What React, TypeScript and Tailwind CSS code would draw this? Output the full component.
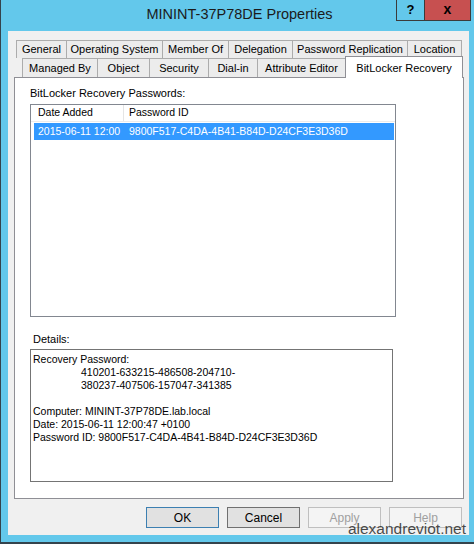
const ROW1 = [
  { label: 'General', w: 50 },
  { label: 'Operating System', w: 96 },
  { label: 'Member Of', w: 66 },
  { label: 'Delegation', w: 64 },
  { label: 'Password Replication', w: 115 },
  { label: 'Location', w: 55 },
];

const ROW2 = [
  { label: 'Managed By', w: 75 },
  { label: 'Object', w: 52 },
  { label: 'Security', w: 59 },
  { label: 'Dial-in', w: 49 },
  { label: 'Attribute Editor', w: 88 },
];

const FONT = "font-['Liberation_Sans',Arial,sans-serif]";

function Btn({ label, kind }: { label: string; kind: 'default' | 'normal' | 'disabled' }) {
  const cls =
    kind === 'default'
      ? 'border-[#3c7fb1] bg-[#e1e1e1] text-black'
      : kind === 'normal'
        ? 'border-[#707070] bg-[#e1e1e1] text-black'
        : 'border-[#bfbfbf] bg-[#f4f4f4] text-[#a0a0a0]';
  return (
    <div className={`w-[73px] h-[21px] border flex items-center justify-center text-[12px] ${cls}`}>{label}</div>
  );
}

export default function App() {
  return (
    <div className={`relative w-[474px] h-[544px] bg-[#63c8eb] border-l border-b-2 border-[#34434c] overflow-hidden ${FONT}`}>
      {/* Title bar */}
      <div className="relative h-[31px] flex items-center justify-center">
        <span className="text-[14.5px] text-[#1b1b1b] pl-[4px] pb-[1px]">MININT-37P78DE Properties</span>
        <div className="absolute top-0 left-[395px] flex">
          <div className="w-[29px] h-[21px] border border-t-0 border-[#3b3b3b] flex items-center justify-center text-[13px] font-bold text-black">?</div>
          <div className="w-[46px] h-[21px] border border-t-0 border-l-0 border-[#3b3b3b] bg-[#c75050] flex items-center justify-center text-[14px] font-bold text-black leading-none pb-[2px]">x</div>
        </div>
      </div>

      {/* Client area */}
      <div className="ml-[7px] w-[461px] h-[504px] bg-[#f0f0f0] pt-[9px] text-[11px] text-black">
        <div className="ml-[6px] w-[450px]">
          {/* Tabs row 1 */}
          <div className="flex ml-[2px] h-[18px]">
            {ROW1.map((t, i) => (
              <div
                key={t.label}
                style={{ width: t.w }}
                className={`h-[18px] border-t border-l border-[#acacac] bg-[#ececec] flex items-center justify-center whitespace-nowrap ${i === ROW1.length - 1 ? 'border-r' : ''}`}
              >
                {t.label}
              </div>
            ))}
          </div>
          {/* Tabs row 2 */}
          <div className="flex items-end ml-[8px] h-[19px]">
            {ROW2.map((t) => (
              <div
                key={t.label}
                style={{ width: t.w }}
                className="h-[19px] border-t border-l border-[#acacac] bg-[#ececec] flex items-center justify-center whitespace-nowrap"
              >
                {t.label}
              </div>
            ))}
            <div className="relative z-10 w-[118px] h-[22px] -mb-px border border-b-0 border-[#8f8f95] bg-white flex items-start justify-center pt-[3px] whitespace-nowrap">
              BitLocker Recovery
            </div>
          </div>
          {/* Panel */}
          <div className="h-[422px] border border-[#8f8f95] bg-white pl-[15px] pt-[9px]">
            <div className="leading-[12px] h-[12px]">BitLocker Recovery Passwords:</div>
            <div className="mt-[5px] w-[366px] h-[213px] border border-[#828790] bg-white text-[10.5px]">
              <div className="flex h-[17px] border-b border-[#ececec] items-center">
                <div className="w-[93px] h-full border-r border-[#e5e5e5] flex items-center pl-[7px]">Date Added</div>
                <div className="flex-1 pl-[5px]">Password ID</div>
              </div>
              <div className="ml-[3px] mr-px mt-px h-[17px] bg-[#3399ff] text-white flex items-center">
                <div className="w-[93px] pl-[4px] whitespace-nowrap">2015-06-11 12:00</div>
                <div className="pl-[2px] whitespace-nowrap">9800F517-C4DA-4B41-B84D-D24CF3E3D36D</div>
              </div>
            </div>
            <div className="mt-[16px] pl-[3px] leading-[12px] h-[12px]">Details:</div>
            <div className="mt-[4px] w-[363px] h-[133px] border border-[#747474] bg-white pt-[3px] pl-[2px] leading-[13px] text-[10.5px]">
              <div>Recovery Password:</div>
              <div className="pl-[48px]">410201-633215-486508-204710-</div>
              <div className="pl-[48px]">380237-407506-157047-341385</div>
              <div className="h-[13px]" />
              <div>Computer: MININT-37P78DE.lab.local</div>
              <div>Date: 2015-06-11 12:00:47 +0100</div>
              <div>Password ID: 9800F517-C4DA-4B41-B84D-D24CF3E3D36D</div>
            </div>
          </div>
        </div>
        {/* Buttons */}
        <div className="mt-[8px] flex justify-end gap-[8px] pr-[7px]">
          <Btn label="OK" kind="default" />
          <Btn label="Cancel" kind="normal" />
          <Btn label="Apply" kind="disabled" />
          <Btn label="Help" kind="disabled" />
        </div>
      </div>

      {/* Watermark */}
      <div className="absolute right-[8px] top-[519px] text-[15.5px] leading-[20px] text-[#2a2a2a]/85 pointer-events-none">
        alexandreviot.net
      </div>
    </div>
  );
}
